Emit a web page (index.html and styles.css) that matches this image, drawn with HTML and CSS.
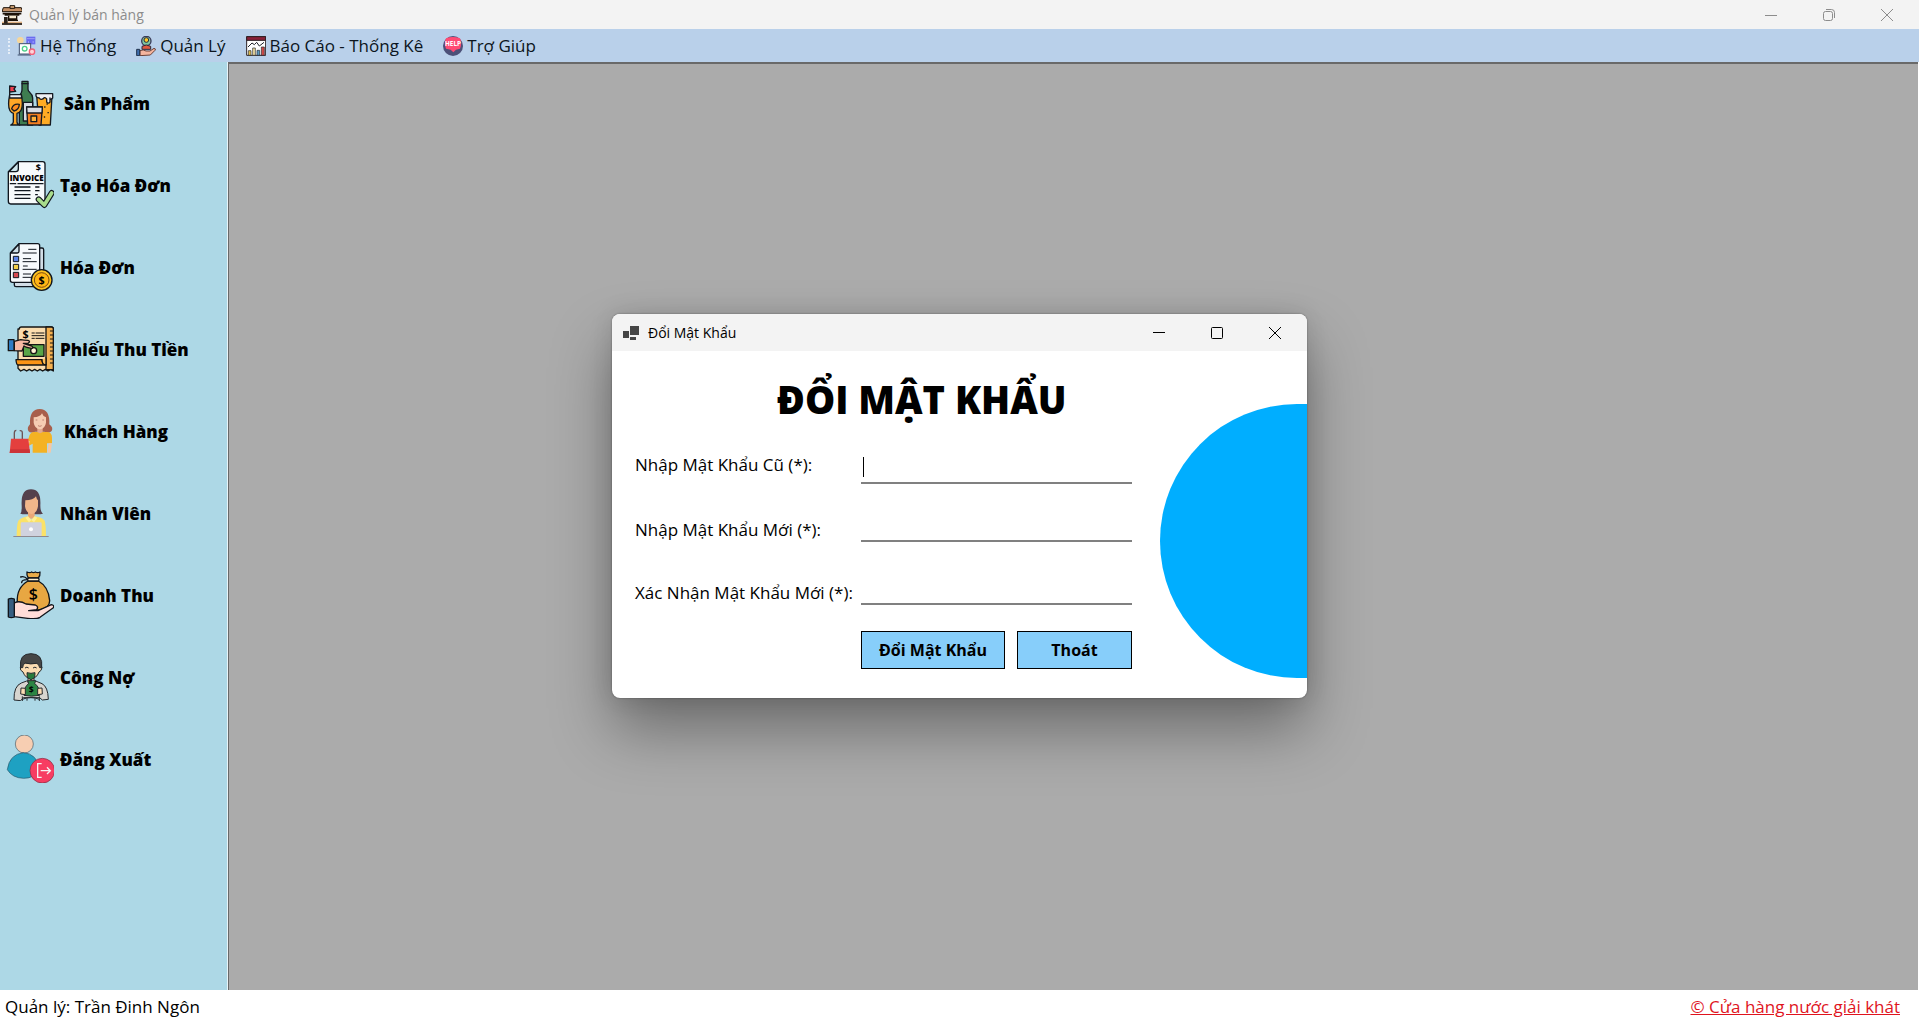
FILE: index.html
```html
<!DOCTYPE html>
<html lang="vi">
<head>
<meta charset="utf-8">
<title>Quản lý bán hàng</title>
<link rel="stylesheet" href="styles.css">
</head>
<body>
<div class="app">
  <header class="titlebar">
    <svg class="app-icon" viewBox="6 14 60 60" aria-hidden="true">
      <path d="M10 22h54l4 12H6z" fill="#c69064" stroke="#1c1208" stroke-width="3"/>
      <path d="M30 16h14v8H30z" fill="#e0b080" stroke="#1c1208" stroke-width="3"/>
      <path d="M8 40h56M14 44h44" stroke="#1c1208" stroke-width="5"/>
      <path d="M26 46v10h24V46M24 60h30" fill="#f6ead0" stroke="#1c1208" stroke-width="4"/>
      <path d="M4 71h62" stroke="#1c1208" stroke-width="5"/>
      <path d="M6 66h60" stroke="#e0b080" stroke-width="4"/>
      <path d="M12 50h11v20H12z" fill="#2c241c"/>
    </svg>
    <span class="titlebar-text">Quản lý bán hàng</span>
    <div class="window-controls">
      <button type="button" aria-label="Thu nhỏ"><svg viewBox="0 0 12 12"><path d="M0 6.5h12"/></svg></button>
      <button type="button" aria-label="Khôi phục"><svg viewBox="0 0 12 12"><rect x=".5" y="2.500" width="9" height="9" rx="2"/><path d="M3 .5h5.500q3 0 3 3V9"/></svg></button>
      <button type="button" aria-label="Đóng"><svg viewBox="0 0 12 12"><path d="M0 0l12 12M12 0L0 12"/></svg></button>
    </div>
  </header>

  <nav class="menubar">
    <span class="grip"></span>
    <button type="button" class="menu menu-first">
      <svg viewBox="48 106 58 60" aria-hidden="true">
        <circle cx="60" cy="119" r="10" fill="#f6d69a"/>
        <rect x="78" y="108" width="27" height="23" fill="#6a6cf0"/><path d="M80 114h23M86 121l-3 3 3 3M97 121l3 3-3 3" stroke="#b9b8ff" stroke-width="2" fill="none"/>
        <rect x="57" y="129" width="34" height="31" fill="#fff" stroke="#41506e" stroke-width="3"/>
        <path d="M52 163h40" stroke="#41506e" stroke-width="3"/>
        <circle cx="73" cy="144" r="7" fill="none" stroke="#4fd08a" stroke-width="4"/>
        <circle cx="95" cy="153" r="8" fill="#ffd3d8" stroke="#f2617a" stroke-width="4"/>
      </svg>Hệ Thống</button>
    <button type="button" class="menu">
      <svg viewBox="416 105 60 60" aria-hidden="true">
        <circle cx="447" cy="120" r="14" fill="#7fc8a0" stroke="#3a3a5a" stroke-width="4"/>
        <circle cx="447" cy="117" r="7" fill="#ffc928" stroke="#2a2a3a" stroke-width="3"/>
        <path d="M434 145v-9q13-8 26 0v9z" fill="#e05a40" stroke="#2a2a3a" stroke-width="3"/>
        <path d="M428 149q10-5 18 1h12l12-8q7 1 3 6l-14 14-31 2z" fill="#f4b49e" stroke="#6a4038" stroke-width="3"/>
        <path d="M418 145h9v19h-9z" fill="#3f6fb0" stroke="#20304a" stroke-width="3"/>
      </svg>Quản Lý</button>
    <button type="button" class="menu">
      <svg viewBox="735 105 60 60" aria-hidden="true">
        <path d="M737 107h57v56h-57z" fill="#fff" stroke="#2a2024" stroke-width="3"/>
        <path d="M737 107h57v11h-57z" fill="#8a2038" stroke="#2a2024" stroke-width="3"/>
        <path d="M741 138l12-12 7 5 7-7 8 11 14-11" fill="none" stroke="#20242c" stroke-width="3"/>
        <path d="M742 149h8v14h-8z" fill="#e0bd4a" stroke="#20242c" stroke-width="2"/>
        <path d="M755 141h8v22h-8z" fill="#f3e0a0" stroke="#20242c" stroke-width="2"/>
        <path d="M768 148h8v15h-8z" fill="#5a9ac0" stroke="#20242c" stroke-width="2"/>
        <path d="M781 138h9v25h-9z" fill="#d04a48" stroke="#20242c" stroke-width="2"/>
      </svg>Báo Cáo - Thống Kê</button>
    <button type="button" class="menu">
      <svg viewBox="639 105 60 60" aria-hidden="true">
        <circle cx="669" cy="135" r="30" fill="#4c5078"/>
        <path d="M648 112q20-8 42 0 7 16 0 31l-12 3-8 8-8-8-14-3q-7-15 0-31z" fill="#ff4b74"/>
        <text x="669" y="136" class="help-word" text-anchor="middle">HELP</text>
      </svg>Trợ Giúp</button>
  </nav>

  <div class="workspace">
    <aside class="sidebar">
      <button type="button" class="item item-wide">
        <svg viewBox="18 236 144 144" aria-hidden="true">
          <g stroke="#151a22" stroke-width="4" stroke-linejoin="round" stroke-linecap="round">
            <path d="M66 243h18v24q0 6 6 10 8 6 8 16v81H58v-81q0-10 6-16 2-4 2-10z" fill="#3e7d50"/>
            <path d="M66 250h18" fill="none"/>
            <path d="M70 306h28v56H70z" fill="#d8dce4"/>
            <path d="M110 285h46l-5 89h-34z" fill="#ffab24"/>
            <path d="M108 280h50v13q-8 8-8 0v12q-5 7-10 0v-9q-6-8-10-1-8 5-12-2-8 0-10-6z" fill="#eef0f4"/>
            <path d="M80 320h47l-4 54H83z" fill="#f47e20"/>
            <path d="M80 320h47l-1 18H81z" fill="#d8dce4"/>
            <path d="M93 347h17v17H93z" fill="#ffb03a"/>
            <path d="M29 283h35q10 50-13 56v26q0 6 8 9H32q8-3 8-9v-26q-21-6-11-56z" fill="#ffa727"/>
            <path d="M29 283h35l1 10H29z" fill="#eef0f4"/>
            <path d="M29 283v-26l18 2-5 7 5 7-18 2" fill="#ef4050"/>
            <path d="M35 325q5-16 23-13-1 17-16 20z" fill="#ff8d20"/>
          </g>
          <path d="M134 320h1M144 337h1M133 350h1M141 311h1" stroke="#151a22" stroke-width="4" stroke-linecap="round"/>
        </svg>Sản Phẩm</button>
      <button type="button" class="item">
        <svg viewBox="18 48 144 144" aria-hidden="true">
          <path d="M55 50h73q7 0 7 7v112q0 8-8 8H32q-7 0-7-8V80z" fill="#f7fafc" stroke="#10161e" stroke-width="4" stroke-linejoin="round"/>
          <path d="M55 51v21q0 8-8 8H27z" fill="#cfe8ee" stroke="#10161e" stroke-width="4" stroke-linejoin="round"/>
          <text x="80" y="108" class="invoice-word" text-anchor="middle">INVOICE</text>
          <text x="115" y="79" class="invoice-dollar" text-anchor="middle">$</text>
          <path d="M31 116h16M54 116h75M45 126h45M45 137h45M45 149h45M45 160h45M107 126h10M107 137h10M107 149h5" stroke="#10161e" stroke-width="4" stroke-linecap="round"/>
          <path d="M116 163l17 17 22-36" fill="none" stroke="#10161e" stroke-width="18" stroke-linecap="round" stroke-linejoin="round"/>
          <path d="M116 163l17 17 22-36" fill="none" stroke="#a8dc8c" stroke-width="11" stroke-linecap="round" stroke-linejoin="round"/>
        </svg>Tạo Hóa Đơn</button>
      <button type="button" class="item">
        <svg viewBox="18 294 144 144" aria-hidden="true">
          <g stroke="#10161e" stroke-width="4" stroke-linejoin="round" stroke-linecap="round">
            <path d="M55 309h71q5 0 5 5v106q0 5-5 5H48q-5 0-5-5v-90z" fill="#d2dde6"/>
            <path d="M57 296h56q6 0 6 6v104q0 6-6 6H37q-6 0-6-6v-82z" fill="#f7fafc"/>
            <path d="M57 297v22q0 5-5 5H32z" fill="#cfe0e8"/>
            <path d="M86 313h22M69 324h40M70 341h22M69 350h40M70 363h12M69 373h40M70 387h22M69 397h26" fill="none" stroke-width="3"/>
          </g>
          <g stroke="#10161e" stroke-width="3"><path d="M40 334h16v16H40z" fill="#5b83e8"/><path d="M40 358h16v16H40z" fill="#f3ce48"/><path d="M40 382h16v16H40z" fill="#d64a50"/></g>
          <circle cx="125" cy="405" r="31" fill="#ffc31f" stroke="#10161e" stroke-width="4"/>
          <circle cx="125" cy="405" r="22" fill="#ffb515" stroke="#7a4a10" stroke-width="3"/>
          <text x="125" y="417" class="coin-dollar" text-anchor="middle">$</text>
        </svg>Hóa Đơn</button>
      <button type="button" class="item">
        <svg viewBox="18 44 144 144" aria-hidden="true">
          <g stroke="#151515" stroke-width="4" stroke-linejoin="round" stroke-linecap="round">
            <path d="M58 56q0-6 6-6h90q6 0 6 6v126l-8-5-8 5-8-5-8 5-8-5-8 5-8-5-8 5-8-5-8 5-8-5-10 5-8-8V56z" fill="#fbdcae"/>
            <path d="M138 50h16q6 0 6 6v122h-22z" fill="#f5b050"/>
            <path d="M151 62h8M151 74h8M151 86h8M151 98h8M151 110h8M151 122h8M151 134h8M151 146h8M151 158h8" stroke-width="3"/>
            <path d="M48 148h78q1 16 12 16H55q-6 0-7-16z" fill="#fb9416"/>
            <path d="M126 148q0 16 12 15v-20" fill="#ffbd55"/>
            <path d="M70 103h62v35H70z" fill="#58a548"/>
            <circle cx="101" cy="121" r="9" fill="#fff3d6"/>
            <path d="M96 68h7M108 68h24M96 76h36M96 84h7M108 84h24" stroke-width="3"/>
            <path d="M43 93l19-5q10 2 22 2 9 3 0 9h-14l25 8q7 5 0 7-17-2-23-7l-6 15-23-1z" fill="#f7b9a4"/>
            <path d="M25 88h17v33H25z" fill="#2e7cc4"/>
          </g>
          <text x="77" y="84" class="coin-dollar" text-anchor="middle">$</text>
        </svg>Phiếu Thu Tiền</button>
      <button type="button" class="item item-wide">
        <svg viewBox="18 291 144 144" aria-hidden="true">
          <path d="M90 343q-2-46 29-46t29 46q13 10 7 20-8 8-22 2h-28q-14 6-20-2-5-10 5-20z" fill="#a85f4c"/>
          <path d="M112 354h16v16h-16z" fill="#e2a98f"/>
          <path d="M101 322q20-1 25-12 3 10 12 12v16q-3 18-18 20-16-2-19-20z" fill="#f6ccb2"/>
          <path d="M107 330h5M127 330h5M114 347q6 4 11 0" stroke="#c08474" stroke-width="3" fill="none"/>
          <path d="M99 366h13q8 7 16 0h13q15 0 15 17v17h-15v28H98v-27l-11 6-5-13 5-13q2-12 12-15z" fill="#f4b223"/>
          <path d="M146 400h10l-4 28h-10zM78 388l11 6-3 13-13-8z" fill="#f4c7a6"/>
          <path d="M43 387v-18q0-8 6-8M67 387v-18q0-8-8-7" fill="none" stroke="#6c5356" stroke-width="4"/>
          <path d="M33 386h52l5 43H29z" fill="#e43f3e"/>
          <path d="M31 418h58l1 11H29z" fill="#cc3438"/>
        </svg>Khách Hàng</button>
      <button type="button" class="item">
        <svg viewBox="18 41 144 144" aria-hidden="true">
          <path d="M61 115q5-5 4-25-3-48 28-48t28 48q0 20 8 25-15 4-35 0-20 4-33 0z" fill="#54404c"/>
          <path d="M84 110h20v20H84z" fill="#eaa877"/>
          <path d="M76 75q24 0 32-12 2 10 6 12v18q-4 22-20 23-16-3-19-23z" fill="#f2b68a"/>
          <path d="M84 123l10 11 10-11q21 3 30 13 4 14 4 47H50q0-37 5-47 8-9 29-13z" fill="#fbe268"/>
          <path d="M84 123l10 11-7 7-11-14zM104 123l-10 11 8 7 10-14z" fill="#fff096"/>
          <rect x="62" y="141" width="63" height="42" rx="4" fill="#d0d2de"/>
          <circle cx="93" cy="162" r="6" fill="#fff"/>
          <path d="M40 184h106" stroke="#8d8990" stroke-width="4"/>
        </svg>Nhân Viên</button>
      <button type="button" class="item">
        <svg viewBox="18 288 144 144" aria-hidden="true">
          <g stroke="#10141a" stroke-width="4" stroke-linejoin="round" stroke-linecap="round">
            <path d="M85 309q-6-8-4-18 9 4 14 0 5 4 11 0 7 4 14 0 1 11-5 18z" fill="#e9ab48"/>
            <path d="M84 318q-35 20-32 64 30 24 65 23 32-5 32-28-3-42-34-59z" fill="#e8a742"/>
            <path d="M82 312q-9-10-20-6M82 314q-17 0-17 9" fill="none"/>
            <rect x="83" y="309" width="34" height="9" rx="4" fill="#fff0d0"/>
            <path d="M43 384q15-9 35 3l28 3q11 5 4 14l-24 3h28l40-18q10 1 6 9l-40 29q-10 6-37 3l-40-5z" fill="#ffddd8"/>
            <path d="M25 372q9-4 18 0v54q-9 4-18 0z" fill="#365e80"/>
          </g>
          <text x="100" y="374" class="bag-dollar" text-anchor="middle">$</text>
        </svg>Doanh Thu</button>
      <button type="button" class="item">
        <svg viewBox="18 38 144 144" aria-hidden="true">
          <g stroke="#25292d" stroke-width="3" stroke-linejoin="round">
            <path d="M42 179q-1-42 22-51l16-6h27l19 8q18 9 19 47l-18 2-8-7H70l-8 9z" fill="#d7d5cf"/>
            <path d="M84 102h18v25q-9 8-18 0z" fill="#f5cca4"/>
            <path d="M66 68h54q3 8 6 13-1 11-9 14-8 20-24 20-17-1-24-20-10-4-8-15z" fill="#fbdcb2"/>
            <path d="M62 82q-6-42 31-42t32 42h-6q-2-12-10-13-18 4-33-1-8 3-8 14z" fill="#464646"/>
            <path d="M81 97q12 4 24 0l-1 14-11 8-11-8z" fill="#287a3c"/>
            <path d="M75 83q6-5 11 0M99 83q6-5 11 0" fill="none"/>
            <path d="M83 121h24l-3 9q15 8 15 35-25 5-47 0 0-27 14-35z" fill="#2c8543"/>
            <path d="M63 143l13 1v19l-14-2zM126 143l-13 1v19l14-2z" fill="#fbdcb2"/>
            <path d="M67 168v14M118 168v14M67 177q26-11 51 0M81 174v7M105 174v7" fill="none"/>
          </g>
          <text x="94" y="157" class="bag-dollar-small" text-anchor="middle">$</text>
        </svg>Công Nợ</button>
      <button type="button" class="item">
        <svg viewBox="18 285 144 144" aria-hidden="true">
          <circle cx="73" cy="312" r="27" fill="#f7ceb2" stroke="#4c5a64" stroke-width="2"/>
          <path d="M22 389q6-46 48-51 40 2 51 51-18 26-50 26-34-1-49-26z" fill="#1ea1c2" stroke="#27566a" stroke-width="2"/>
          <circle cx="127" cy="392" r="37" fill="#f73d62" stroke="#7c3044" stroke-width="2"/>
          <path d="M125 371h-12v41h12M122 392h27M141 382l10 10-10 10" fill="none" stroke="#f5f3f3" stroke-width="4"/>
        </svg>Đăng Xuất</button>
    </aside>
    <main class="mdi"></main>
  </div>

  <footer class="statusbar">
    <span>Quản lý: Trần Đinh Ngôn</span>
    <a href="#">© Cửa hàng nước giải khát</a>
  </footer>
</div>

<div class="overlay">
  <section class="dialog" role="dialog" aria-labelledby="dialog-caption">
    <header class="dialog-bar">
      <svg class="form-icon" viewBox="0 0 16 14" aria-hidden="true"><path d="M7 0h9v9H7zM0 5h6v7H0zM7 11h6v3H7z" fill="#454545"/></svg>
      <span id="dialog-caption">Đổi Mật Khẩu</span>
      <div class="window-controls dark">
        <button type="button" aria-label="Thu nhỏ"><svg viewBox="0 0 12 12"><path d="M0 5.500h12"/></svg></button>
        <button type="button" aria-label="Phóng to"><svg viewBox="0 0 12 12"><rect x=".5" y=".5" width="11" height="11" rx="1"/></svg></button>
        <button type="button" aria-label="Đóng"><svg viewBox="0 0 12 12"><path d="M0 0l12 12M12 0L0 12"/></svg></button>
      </div>
    </header>
    <div class="dialog-body">
      <form class="form">
        <h1>ĐỔI MẬT KHẨU</h1>
        <div class="fields">
          <label class="label-raised" for="old">Nhập Mật Khẩu Cũ (*):</label>
          <div class="field"><span class="caret"></span><input id="old" type="password"></div>
          <label for="new">Nhập Mật Khẩu Mới (*):</label>
          <div class="field"><input id="new" type="password"></div>
          <label for="confirm">Xác Nhận Mật Khẩu Mới (*):</label>
          <div class="field"><input id="confirm" type="password"></div>
        </div>
        <div class="actions">
          <button type="button" class="action action-main">Đổi Mật Khẩu</button>
          <button type="button" class="action">Thoát</button>
        </div>
      </form>
      <svg class="disc" viewBox="0 0 147 274" aria-hidden="true"><circle cx="137" cy="137" r="137" fill="#00aeff"/><path d="M137 0h10v274h-10z" fill="#00aeff"/></svg>
    </div>
  </section>
</div>
</body>
</html>
```
FILE: styles.css
```css
* { box-sizing: border-box; }

body {
  margin: 0;
  font-family: "Open Sans", "Noto Sans", sans-serif;
  color: #000;
}

button {
  font-family: inherit;
  color: inherit;
  padding: 0;
  border: 0;
  background: none;
}

.app {
  display: flex;
  flex-direction: column;
  min-height: 100vh;
}

/* main window caption */
.titlebar {
  display: flex;
  align-items: center;
  gap: 7px;
  height: 29px;
  padding-left: 2px;
  background: #f3f3f3;
  color: #8c8c8c;
  font-size: 14px;
}

.app-icon { width: 20px; height: 20px; }

.window-controls {
  display: flex;
  align-self: stretch;
  margin-left: auto;
  padding-right: 3px;
}

.window-controls button {
  display: grid;
  place-items: center;
  width: 58px;
}

.window-controls svg {
  width: 12px;
  height: 12px;
  overflow: visible;
  fill: none;
  stroke: #8c8c8c;
}

.window-controls.dark svg { stroke: #000; }

/* menu strip */
.menubar {
  display: flex;
  align-items: center;
  gap: 20px;
  height: 33px;
  padding-left: 8px;
  background: #b9d0ea;
}

.grip {
  height: 16px;
  border-left: 2px dotted #e6eef8;
}

.menu {
  display: flex;
  align-items: center;
  gap: 4px;
  font-size: 17px;
  line-height: 24px;
  color: #0c1520;
}

.menu-first { margin-left: -14px; }

.menu svg { width: 20px; height: 20px; }

.help-word { font: bold 19px "Open Sans", sans-serif; fill: #fff; }

/* sidebar and document area */
.workspace {
  display: flex;
  flex: 1;
}

.sidebar {
  width: 228px;
  background: #add8e6;
  border-right: 1px solid #e8f4f8;
}

.item {
  display: flex;
  align-items: center;
  gap: 6px;
  width: 100%;
  height: 82px;
  padding-left: 6px;
  font-size: 17px;
  font-weight: 800;
}

.item-wide { gap: 10px; }

.item svg { width: 48px; height: 48px; }

.invoice-word { font: 800 24px "Open Sans", sans-serif; }
.invoice-dollar { font: 700 27px "Open Sans", sans-serif; }
.coin-dollar { font: 700 32px "Open Sans", sans-serif; }
.bag-dollar { font: 600 48px "Open Sans", sans-serif; }
.bag-dollar-small { font: 700 26px "Open Sans", sans-serif; }

.mdi {
  flex: 1;
  background: #ababab;
  border: solid #696969;
  border-width: 2px 0 0 1px;
  margin-right: 1px;
}

.statusbar {
  display: flex;
  justify-content: space-between;
  align-items: center;
  height: 27px;
  padding: 7px 19px 0 5px;
  background: #fff;
  font-size: 17px;
  line-height: 20px;
}

.statusbar a { color: #e0141e; }

/* password dialog */
.overlay {
  position: absolute;
  inset: 0 0 5px;
  display: grid;
  place-items: center;
}

.dialog {
  width: 695px;
  border-radius: 8px;
  overflow: hidden;
  background: #fff;
  box-shadow: 0 0 2px rgba(0, 0, 0, .4), 0 32px 60px rgba(0, 0, 0, .36), 0 0 24px rgba(0, 0, 0, .12);
}

.dialog-bar {
  display: flex;
  align-items: center;
  gap: 9px;
  height: 37px;
  padding-left: 11px;
  background: #f3f3f3;
  font-size: 14px;
}

.form-icon { width: 16px; height: 14px; }

.dialog-body {
  display: flex;
  justify-content: space-between;
  height: 347px;
}

.form {
  display: flex;
  flex-direction: column;
  padding: 23px 0 0 23px;
}

h1 {
  margin: 0 0 0 142px;
  font-size: 38px;
  font-weight: 800;
  line-height: 50px;
  white-space: nowrap;
}

.fields {
  display: grid;
  grid-template-columns: 226px 271px;
  grid-template-rows: 60px 58px 63px;
  font-size: 17px;
  font-weight: 500;
  line-height: 24px;
}

.fields label {
  align-self: end;
  white-space: nowrap;
}

.fields .label-raised { padding-bottom: 7px; }

.field {
  display: flex;
  align-items: center;
  align-self: end;
  height: 32px;
  border-bottom: 2px solid #808080;
}

.field input {
  flex: 1;
  min-width: 0;
  border: 0;
  padding: 0;
  outline: 0;
  background: none;
  font: inherit;
}

.caret {
  width: 1px;
  height: 20px;
  margin-left: 2px;
  background: #000;
}

.actions {
  display: flex;
  gap: 12px;
  margin: 26px 0 0 226px;
}

.action {
  flex: 1;
  height: 38px;
  border: 1px solid #000;
  background: #87cefa;
  font-size: 16px;
  font-weight: 700;
}

.action-main { flex: 0 0 144px; }

.disc {
  width: 147px;
  height: 274px;
  margin-top: 53px;
}
```
